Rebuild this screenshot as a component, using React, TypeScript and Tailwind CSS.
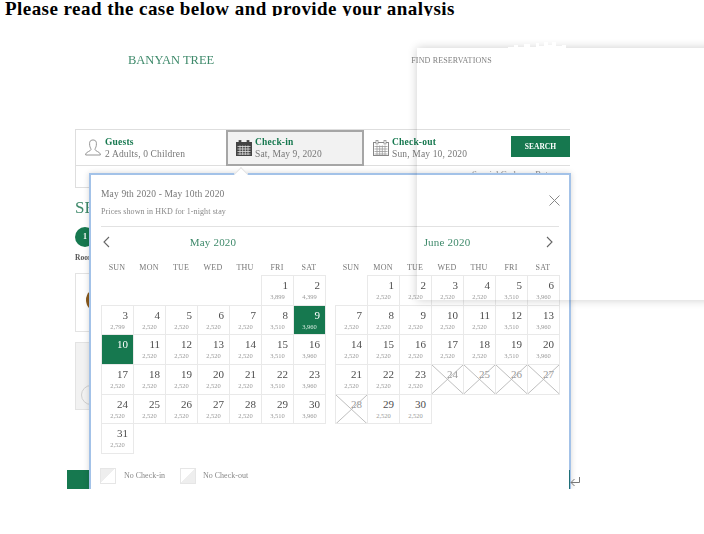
import React from 'react';

const serif = "font-['Liberation_Serif',serif]";

type Day = { day: number; price?: string; selected?: boolean; blocked?: boolean };

const mayPrice = (d: number) => {
  if (d === 1) return '3,899';
  if (d === 2) return '4,399';
  if (d === 3) return '2,799';
  if (d % 7 === 2) return '3,960';
  if (d % 7 === 1) return '3,510';
  return '2,520';
};

const junePrice = (d: number) => {
  if (d % 7 === 6) return '3,960';
  if (d % 7 === 5) return '3,510';
  return '2,520';
};

const mayDays: Day[] = Array.from({ length: 31 }, (_, i) => {
  const d = i + 1;
  if (d === 10) return { day: d, selected: true };
  if (d === 9) return { day: d, price: mayPrice(d), selected: true };
  return { day: d, price: mayPrice(d) };
});

const juneDays: Day[] = Array.from({ length: 30 }, (_, i) => {
  const d = i + 1;
  if (d >= 24 && d <= 28) return { day: d, blocked: true };
  return { day: d, price: junePrice(d) };
});

const weekdays = ['SUN', 'MON', 'TUE', 'WED', 'THU', 'FRI', 'SAT'];

const DayCell: React.FC<{ item: Day }> = ({ item }) => (
  <div
    className={`relative -mr-px -mb-px border border-[#e9e9e9] ${item.selected ? 'bg-[#16784f] text-white' : 'bg-white text-[#4d4d4d]'}`}
  >
    <div className={`pr-[5px] pt-[2px] text-right text-[11px] leading-[15px] ${item.blocked ? 'text-[#999]' : ''}`}>{item.day}</div>
    {item.price && (
      <div className={`text-center text-[6.5px] leading-[8px] ${item.selected ? 'text-[#d5ebe0]' : 'text-[#9a9a9a]'}`}>
        {item.price}
      </div>
    )}
    {item.blocked && (
      <svg className="absolute inset-0 h-full w-full" viewBox="0 0 32 30" preserveAspectRatio="none">
        <path d="M0 0L32 30M32 0L0 30" stroke="#b4b4b4" strokeWidth="0.9" fill="none" />
      </svg>
    )}
  </div>
);

const Month: React.FC<{ title: string; blanks: number; days: Day[] }> = ({ title, blanks, days }) => (
  <div className="w-[224px]">
    <div className="flex h-[16px] items-center justify-center text-[11px] tracking-[0.2px] text-[#3f8a6b]">{title}</div>
    <div className="mt-[10px] grid h-[15px] grid-cols-7 text-center text-[8px] leading-[15px] tracking-[0.2px] text-[#777]">
      {weekdays.map((w) => (
        <div key={w}>{w}</div>
      ))}
    </div>
    <div className="grid grid-cols-[repeat(7,32px)] auto-rows-[29.7px]">
      {Array.from({ length: blanks }, (_, i) => (
        <div key={i} />
      ))}
      {days.map((d) => (
        <DayCell key={d.day} item={d} />
      ))}
    </div>
  </div>
);

const CalendarIcon: React.FC<{ solid?: boolean }> = ({ solid }) => (
  <svg width="16" height="16" viewBox="0 0 16 16" className="shrink-0">
    <rect x="0.5" y="2.5" width="15" height="13" fill={solid ? '#444' : '#fff'} stroke={solid ? '#444' : '#888'} />
    <rect x="3" y="0.5" width="2" height="3.5" fill={solid ? '#444' : '#fff'} stroke={solid ? '#444' : '#888'} strokeWidth="0.7" />
    <rect x="11" y="0.5" width="2" height="3.5" fill={solid ? '#444' : '#fff'} stroke={solid ? '#444' : '#888'} strokeWidth="0.7" />
    <path
      d="M1.5 6.5H14.5M1.5 9H14.5M1.5 11.5H14.5M1.5 14H14.5M4 5.5V15M6.7 5.5V15M9.3 5.5V15M12 5.5V15"
      stroke={solid ? '#ddd' : '#999'}
      strokeWidth="0.8"
      fill="none"
    />
  </svg>
);

const App: React.FC = () => {
  return (
    <div className={`h-[534px] w-[704px] overflow-hidden bg-white ${serif}`}>
      <h1 className="h-4 overflow-hidden whitespace-nowrap pl-[5px] text-[19px] leading-[18px] font-bold tracking-[0.45px] text-black">
        Please read the case below and provide your{' '}
        <span className="underline decoration-[#3a63c8] decoration-1 underline-offset-1">an</span>alysis
      </h1>

      <div className="relative h-[518px] blur-[0.35px]">
        {/* page behind the date picker */}
        <div className="ml-[75px] w-[495px]">
          <div className="flex h-[113px] items-start pt-[37px]">
            <span className="ml-[53px] text-[12.5px] leading-[15px] text-[#3f8a6b]">BANYAN TREE</span>
            <span className="ml-[197px] pt-[2px] text-[8px] leading-[12px] tracking-[0.15px] text-[#808080]">FIND RESERVATIONS</span>
          </div>

          <div className="h-[59px] border-y border-l border-[#dedede]">
            <div className="flex h-[36px] border-b border-[#dedede]">
              <div className="flex w-[150px] items-center pl-[9px]">
                <svg width="16" height="17" viewBox="0 0 16 17" className="shrink-0">
                  <path
                    d="M6 1.5C4.6 2 4.4 4 4.7 6.5C5 8.5 6 9.5 6 10.5C6 12 1 13 0.7 15V16H15.3V15C15 13 10 12 10 10.5C10 9.5 11 8.5 11.3 6.5C11.6 4 11.4 2 10 1.5C9 0.8 7 0.8 6 1.5Z"
                    fill="none"
                    stroke="#8a8a8a"
                    strokeWidth="0.9"
                  />
                </svg>
                <div className="ml-[4px] text-[9.5px] leading-[12px]">
                  <div className="font-bold tracking-[0.2px] text-[#16784f]">Guests</div>
                  <div className="tracking-[0.15px] text-[#777]">2 Adults, 0 Children</div>
                </div>
              </div>
              <div className="flex h-[36px] w-[138px] items-center border-2 border-[#a6a6a6] bg-[#f2f2f2] pl-[8px]">
                <CalendarIcon solid />
                <div className="ml-[3px] text-[9.5px] leading-[12px]">
                  <div className="font-bold tracking-[0.2px] text-[#16784f]">Check-in</div>
                  <div className="tracking-[0.1px] text-[#777]">Sat, May 9, 2020</div>
                </div>
              </div>
              <div className="flex w-[147px] items-center pl-[9px]">
                <CalendarIcon />
                <div className="ml-[3px] text-[9.5px] leading-[12px]">
                  <div className="font-bold tracking-[0.2px] text-[#16784f]">Check-out</div>
                  <div className="tracking-[0.15px] text-[#777]">Sun, May 10, 2020</div>
                </div>
              </div>
              <div className="mt-[6px] flex h-[21px] w-[59px] items-center justify-center bg-[#16784f] text-[7.5px] font-bold text-white">
                SEARCH
              </div>
            </div>
            <div className="pt-[2px] pl-[396px] text-[9px] leading-[12px] text-[#888]">Special Codes or Rates</div>
          </div>

          <div className="mt-[9px] h-[22px] text-[17px] leading-[22px] text-[#3f8a6b]">SE</div>
          <div className="mt-[8px] flex h-[20px] w-[20px] items-center justify-center rounded-full bg-[#16784f] text-[8px] font-bold text-white">
            1
          </div>
          <div className="mt-[5px] h-[11px] text-[7.5px] leading-[11px] font-bold text-[#555]">Room</div>
          <div className="mt-[10px] h-[59px] overflow-hidden border border-[#e3e3e3] pt-[14px] pl-[10px]">
            <div className="h-[24px] w-[24px] rounded-full bg-[#8a5a1c]" />
          </div>
          <div className="mt-[10px] h-[68px] border border-[#e3e3e3] bg-[#f2f2f2] pt-[42px] pl-[5px]">
            <div className="h-[20px] w-[20px] rounded-full border border-[#cfcfcf]" />
          </div>
          <div className="-ml-2 mt-[60px] h-[19px] w-[30px] bg-[#16784f]" />
        </div>

        {/* date picker popover, cut off at the bottom like the pasted image */}
        <div className="absolute left-[89px] top-[157px] h-[316px] w-[482px] overflow-hidden border-x-2 border-t-2 border-[#a3c2e8] bg-white px-[10px] shadow-[0_0_6px_rgba(0,0,0,0.16)] [clip-path:inset(-10px_-10px_0_-10px)]">
          <div className="flex h-[26px] items-end text-[9.5px] leading-[14px] tracking-[0.15px] text-[#777]">May 9th 2020 - May 10th 2020</div>
          <div className="mt-[5px] h-[12px] text-[8px] leading-[12px] tracking-[0.1px] text-[#888]">Prices shown in HKD for 1-night stay</div>
          <div className="mt-[8px] h-px w-[458px] bg-[#e2e2e2]" />
          <div className="mt-[7px] flex gap-[10px]">
            <Month title="May 2020" blanks={5} days={mayDays} />
            <Month title="June 2020" blanks={1} days={juneDays} />
          </div>
          <div className="absolute left-[9px] top-[293px] flex items-center">
            <div className="h-[16px] w-[16px] border border-[#e6e6e6] bg-[linear-gradient(135deg,#eeeeee_50%,#ffffff_50%)]" />
            <span className="ml-[8px] w-[56px] text-[8px] text-[#888]">No Check-in</span>
            <div className="h-[16px] w-[16px] border border-[#e6e6e6] bg-[linear-gradient(135deg,#ffffff_50%,#eeeeee_50%)]" />
            <span className="ml-[7px] text-[8px] text-[#888]">No Check-out</span>
          </div>
          <svg className="absolute left-[11px] top-[61px]" width="9" height="12" viewBox="0 0 9 12">
            <path d="M7 1L2 6L7 11" fill="none" stroke="#666" strokeWidth="1.1" />
          </svg>
          <svg className="absolute left-[454px] top-[61px]" width="9" height="12" viewBox="0 0 9 12">
            <path d="M2 1L7 6L2 11" fill="none" stroke="#666" strokeWidth="1.1" />
          </svg>
          <svg className="absolute left-[458px] top-[20px]" width="11" height="11" viewBox="0 0 11 11">
            <path d="M0.5 0.5L10.5 10.5M10.5 0.5L0.5 10.5" fill="none" stroke="#888" strokeWidth="1" />
          </svg>
        </div>

        {/* notch under the check-in tab */}
        <div className="absolute left-[236px] top-[153px] h-[10px] w-[10px] rotate-45 border-l border-t border-[#e3e3e3] bg-white" />

        {/* pasted white panel, only its shadow shows */}
        <div className="pointer-events-none absolute left-[417px] top-[32px] h-[252px] w-[300px] shadow-[0_0_9px_rgba(0,0,0,0.2)]" />
        <svg className="absolute left-[508px] top-[26px]" width="64" height="8" viewBox="0 0 64 8">
          <path d="M0 8V5H6V3H10V5H16V2H22V5H28V1H31V4H36V0H40V3H44V0H48V4H54V3H58V6H64V8Z" fill="#fff" />
        </svg>

        <div className="absolute left-[569px] top-[454px] h-[19px] w-px bg-[#1f6f78]" />
        <svg className="absolute left-[570px] top-[460px]" width="11" height="12" viewBox="0 0 11 12">
          <path d="M9.5 1V6.5H1M4.5 3L1 6.5L4.5 10" fill="none" stroke="#777" strokeWidth="1" />
        </svg>
      </div>
    </div>
  );
};

export default App;
